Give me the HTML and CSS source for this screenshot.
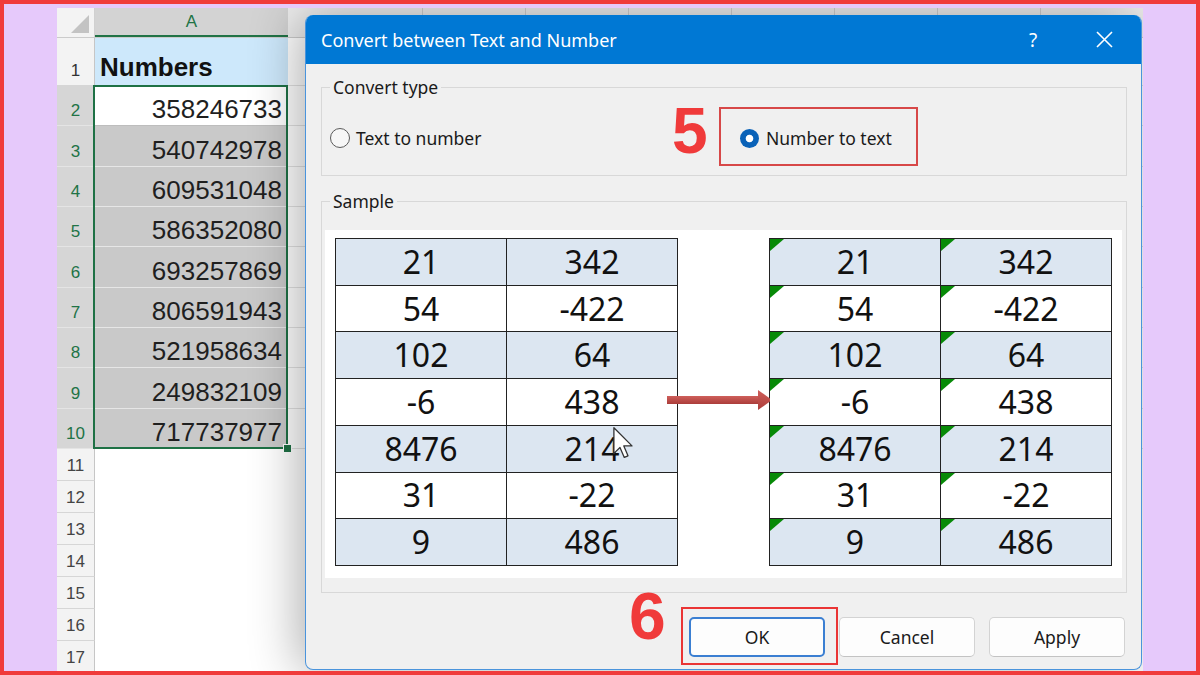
FILE: index.html
```html
<!DOCTYPE html>
<html>
<head>
<meta charset="utf-8">
<link rel="stylesheet" href="styles.css">
</head>
<body>
<div class="frame">
  <div class="sheet">
    <div class="hdr">
      <div class="corner"><span class="tri"></span></div>
      <div class="colA">A</div>
      <div class="col b"></div>
      <div class="col"></div>
      <div class="col"></div>
      <div class="col"></div>
      <div class="col"></div>
      <div class="col"></div>
      <div class="col"></div>
      <div class="col last"></div>
    </div>
    <div class="row r1"><div class="rh">1</div><div class="ca head">Numbers</div><div class="rest"></div></div>
    <div class="row rs"><div class="rh">2</div><div class="ca num active">358246733</div><div class="rest"></div></div>
    <div class="row rs"><div class="rh">3</div><div class="ca num">540742978</div><div class="rest"></div></div>
    <div class="row rs"><div class="rh">4</div><div class="ca num">609531048</div><div class="rest"></div></div>
    <div class="row rs"><div class="rh">5</div><div class="ca num">586352080</div><div class="rest"></div></div>
    <div class="row rs"><div class="rh">6</div><div class="ca num">693257869</div><div class="rest"></div></div>
    <div class="row rs"><div class="rh">7</div><div class="ca num">806591943</div><div class="rest"></div></div>
    <div class="row rs"><div class="rh">8</div><div class="ca num">521958634</div><div class="rest"></div></div>
    <div class="row rs"><div class="rh">9</div><div class="ca num">249832109</div><div class="rest"></div></div>
    <div class="row rs"><div class="rh">10</div><div class="ca num">717737977</div><div class="rest"></div></div>
    <div class="row re"><div class="rh">11</div><div class="ca"></div><div class="rest"></div></div>
    <div class="row re"><div class="rh">12</div><div class="ca"></div><div class="rest"></div></div>
    <div class="row re"><div class="rh">13</div><div class="ca"></div><div class="rest"></div></div>
    <div class="row re"><div class="rh">14</div><div class="ca"></div><div class="rest"></div></div>
    <div class="row re"><div class="rh">15</div><div class="ca"></div><div class="rest"></div></div>
    <div class="row re"><div class="rh">16</div><div class="ca"></div><div class="rest"></div></div>
    <div class="row re"><div class="rh">17</div><div class="ca"></div><div class="rest"></div></div>
    <div class="selection"><span class="handle"></span></div>

    <div class="dialog">
      <div class="titlebar">
        <span class="title">Convert between Text and Number</span>
        <span class="help">?</span>
        <svg class="close" width="17" height="17" viewBox="0 0 17 17"><path d="M1 1 L16 16 M16 1 L1 16" stroke="#fff" stroke-width="1.6" fill="none"/></svg>
      </div>
      <div class="body">
        <fieldset class="group gtype">
          <legend>Convert type</legend>
          <div class="radios">
            <label class="opt"><span class="radio"></span>Text to number</label>
            <label class="opt sel"><span class="radio on"></span>Number to text<span class="mark m5">5</span><span class="box box5"></span></label>
          </div>
        </fieldset>
        <fieldset class="group gsample">
          <legend>Sample</legend>
          <div class="canvas">
            <div class="tbl">
              <div class="c">21</div><div class="c">342</div>
              <div class="c w">54</div><div class="c w">-422</div>
              <div class="c">102</div><div class="c">64</div>
              <div class="c w">-6</div><div class="c w">438</div>
              <div class="c">8476</div><div class="c">214</div>
              <div class="c w">31</div><div class="c w">-22</div>
              <div class="c">9</div><div class="c">486</div>
            </div>
            <svg class="arrow" width="106" height="20" viewBox="0 0 106 20">
              <defs><linearGradient id="ag" x1="0" y1="0" x2="0" y2="1"><stop offset="0" stop-color="#cf5f5b"/><stop offset="1" stop-color="#ab3d3a"/></linearGradient></defs>
              <rect x="0" y="6" width="94" height="8" fill="url(#ag)"/>
              <polygon points="91,0 105,10 91,20" fill="url(#ag)"/>
            </svg>
            <svg class="cursor" width="21" height="32" viewBox="0 0 13 20"><path d="M0.5 0.5 L0.5 16.5 L4.3 12.8 L7 19 L9.3 18 L6.7 11.8 L11.8 11.8 Z" fill="#fff" stroke="#333" stroke-width="0.8" stroke-linejoin="round"/></svg>
            <div class="tbl txt">
              <div class="c">21</div><div class="c">342</div>
              <div class="c w">54</div><div class="c w">-422</div>
              <div class="c">102</div><div class="c">64</div>
              <div class="c w">-6</div><div class="c w">438</div>
              <div class="c">8476</div><div class="c">214</div>
              <div class="c w">31</div><div class="c w">-22</div>
              <div class="c">9</div><div class="c">486</div>
            </div>
          </div>
        </fieldset>
        <div class="buttons">
          <button class="btn ok">OK<span class="mark m6">6</span><span class="box box6"></span></button>
          <button class="btn">Cancel</button>
          <button class="btn">Apply</button>
        </div>
      </div>
    </div>
  </div>
</div>
</body>
</html>
```
FILE: styles.css
```css
* { box-sizing: border-box; }
body { margin: 0; font-family: "Noto Sans", sans-serif; }

.frame {
  width: 1200px; height: 675px;
  border: 4px solid #f03b3b;
  background: #e6c9fb;
  padding: 4px 0 0 53px;
}
.sheet {
  position: relative;
  width: 1086px; height: 663px;
  overflow: hidden;
  background: #fff;
  font-family: "Liberation Sans", Arial, sans-serif;
}

/* header row */
.hdr { display: flex; height: 30px; background: #ededed; border-bottom: 1px solid #cbcbcb; }
.corner {
  flex: 0 0 38px; display: flex; justify-content: flex-end; align-items: flex-end;
  padding: 0 5px 4px 0; background: #f3f3f3; border-right: 1px solid #d0d0d0;
}
.tri { width: 0; height: 0; border-left: 18px solid transparent; border-bottom: 18px solid #c3c3c3; }
.colA {
  flex: 0 0 193px; background: #d3d3d3; color: #217346; font-size: 17px;
  display: flex; align-items: center; justify-content: center;
  border-bottom: 2px solid #217346;
}
.col { flex: 0 0 103px; border-right: 1px solid #cfcfcf; }
.col.b { flex-basis: 135px; }
.col.last { flex: 1 1 auto; border-right: 0; }

/* rows */
.row { display: flex; }
.r1 { height: 48px; }
.rs { height: 40.33px; }
.re { height: 32px; }
.rh {
  flex: 0 0 38px; display: flex; justify-content: center; align-items: flex-end;
  padding-bottom: 4px; font-size: 17px; line-height: 20px; color: #444;
  background: #f3f3f3; border-right: 1px solid #c6c6c6; border-bottom: 1px solid #d6d6d6;
}
.r1 .rh { color: #333; }
.rs .rh { background: #d6d6d6; color: #217346; border-bottom-color: #e4e4e4; }
.ca { flex: 0 0 193px; border-bottom: 1px solid #e2e2e2; }
.rest { flex: 1 1 auto; border-bottom: 1px solid #e2e2e2; }
.re .ca, .re .rest { border-bottom: 0; }
.ca.head {
  background: #cde8fb; font-weight: bold; font-size: 26px; line-height: 28px;
  display: flex; align-items: flex-end; padding: 0 0 4px 5px; color: #111;
}
.ca.num {
  background: #c9c9c9; font-size: 26px; line-height: 28px; color: #1f1f1f;
  display: flex; align-items: flex-end; justify-content: flex-end; padding: 0 6px 2px 0;
  border-bottom: 1px solid #e6e6e6;
}
.ca.num.active { background: #fff; border-bottom-color: #bdbdbd; }

.selection {
  position: absolute; left: 36px; top: 77px; width: 195px; height: 364px;
  border: 2px solid #1e7145;
}
.handle {
  position: absolute; right: -6px; bottom: -6px; width: 9px; height: 9px;
  background: #1e7145; border: 1px solid #fff;
}

/* dialog */
.dialog {
  position: absolute; left: 248px; top: 7px; width: 837px; height: 655px;
  background: #f0f0f0; border: 1px solid #4a94dc; border-top: 0;
  border-radius: 8px; overflow: hidden;
  box-shadow: -6px 0 50px rgba(0,0,0,0.32);
  font-family: "Noto Sans", sans-serif; color: #1a1a1a;
}
.titlebar {
  height: 49px; background: #0078d4; color: #fff;
  display: flex; align-items: center; padding: 0 28px 0 15px;
}
.title { flex: 1 1 auto; font-size: 18px; }
.help { font-size: 19px; width: 10px; }
.close { margin-left: 57px; }

.body { padding: 13px 14px 0 15px; }
.group { margin: 0; border: 1px solid #d8d8d8; min-width: 0; }
.group legend { font-size: 17.5px; line-height: 20px; padding: 0 3px; }
.gtype { padding: 29px 0 25px 8px; }
.radios { display: grid; grid-template-columns: 410px auto; height: 24px; align-items: center; font-size: 17.5px; }
.opt { display: inline-flex; align-items: center; position: relative; }
.radio {
  width: 20px; height: 20px; border-radius: 50%;
  border: 1.5px solid #5b5b5b; background: #f7f7f7; margin-right: 6px;
}
.radio.on {
  width: 19px; height: 19px; border: 0; margin-right: 7px;
  background: radial-gradient(circle, #fff 0 3.4px, #0a62b8 4.2px);
}
.mark {
  position: absolute; font-family: "Liberation Sans", Arial, sans-serif;
  font-weight: bold; color: #f03a3a; line-height: 1;
}
.m5 { font-size: 64px; left: -68px; top: -27px; }
.box { position: absolute; border: 2px solid #d74848; }
.box5 { left: -21px; top: -19px; width: 199px; height: 59px; }

.gsample { margin-top: 15px; padding: 19px 4px 14px 3px; }
.gsample legend { margin-left: 5px; }
.canvas {
  position: relative; background: #fff; height: 348px;
  display: flex; justify-content: space-between; padding: 8px 10px 12px 10px;
}
.tbl {
  width: 343px; height: 328px; display: grid;
  grid-template-columns: 1fr 1fr; grid-template-rows: repeat(7, 1fr);
  border-top: 1.5px solid #222; border-left: 1.5px solid #222;
}
.c {
  position: relative; background: #dce6f1;
  border-right: 1.5px solid #222; border-bottom: 1.5px solid #222;
  display: flex; align-items: center; justify-content: center;
  font-size: 32px; color: #111; line-height: 1;
}
.c.w { background: #fff; }
.txt .c::before {
  content: ""; position: absolute; left: 0; top: 0; width: 0; height: 0;
  border-top: 12px solid #078a07; border-right: 14px solid transparent;
}
.arrow { position: absolute; left: 342px; top: 160px; }
.cursor { position: absolute; left: 288px; top: 197px; }

.buttons { display: flex; justify-content: flex-end; gap: 14px; margin: 24px 2px 0 0; }
.btn {
  position: relative; width: 136px; height: 40px;
  background: #fdfdfd; border: 1px solid #d3d3d3; border-bottom-color: #c3c3c3;
  border-radius: 5px; font-family: "Noto Sans", sans-serif; font-size: 17.5px; color: #1a1a1a;
  padding: 0;
}
.btn.ok { border: 2px solid #3b7fd2; }
.m6 { font-size: 66px; left: -62px; top: -36px; }
.box6 { left: -10px; top: -12px; width: 157px; height: 58px; border-color: #ea3535; }
```
